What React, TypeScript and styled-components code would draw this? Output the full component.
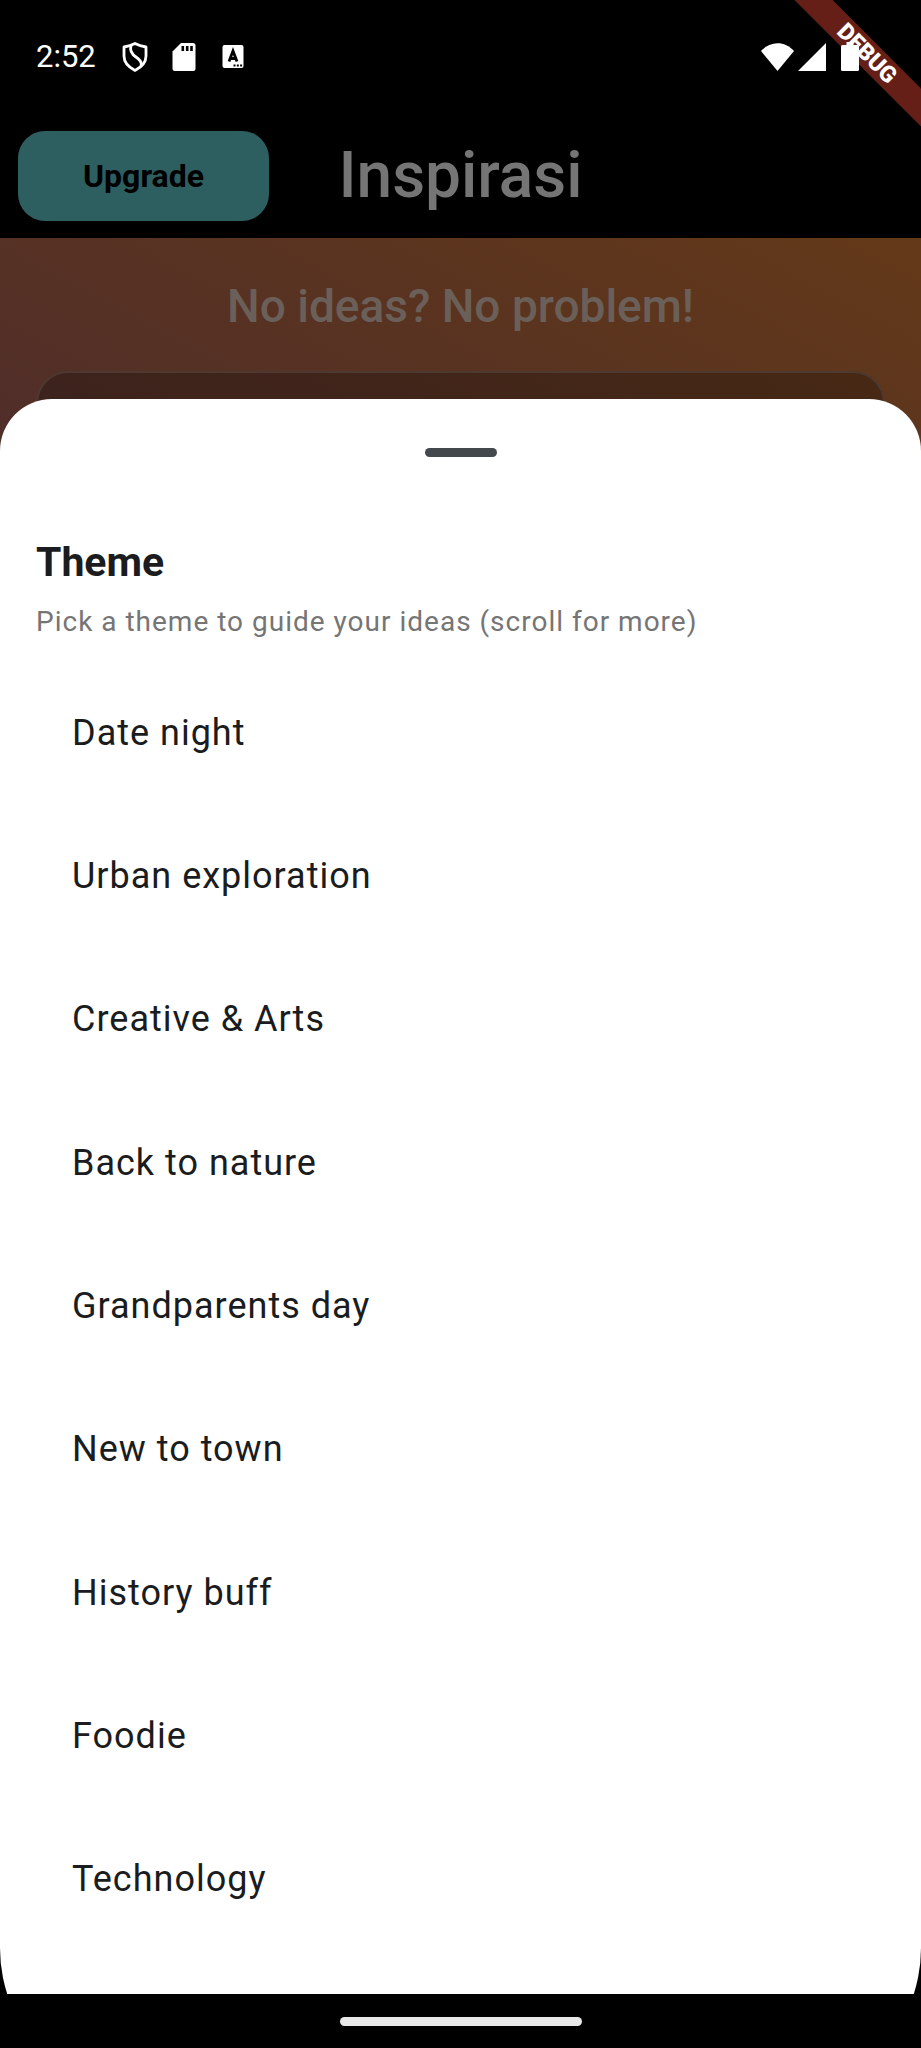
import React from "react";
import styled, { createGlobalStyle } from "styled-components";

const GlobalStyle = createGlobalStyle`
  *, *::before, *::after { box-sizing: border-box; }
  body { margin: 0; background: #000; font-family: Roboto, "Liberation Sans", sans-serif; }
  button { font: inherit; border: 0; cursor: pointer; }
  h1, h2, p, ul { margin: 0; padding: 0; }
`;

const Screen = styled.div`
  position: relative;
  display: flex;
  flex-direction: column;
  min-height: 100vh;
  background: #000;
`;

const StatusBar = styled.header`
  display: flex;
  align-items: center;
  justify-content: space-between;
  height: 113px;
  padding: 0 62px 0 36px;
`;

const StatusGroup = styled.div<{ $gap: number }>`
  position: relative;
  z-index: 2;
  display: flex;
  align-items: center;
  gap: ${(p) => p.$gap}px;
  color: #fff;
`;

const Clock = styled.time`
  margin-right: 4px;
  font-size: 31px;
  line-height: 40px;
`;

const DebugCorner = styled.div`
  position: absolute;
  top: 0;
  right: 0;
  z-index: 1;
  width: 160px;
  height: 160px;
  overflow: hidden;
  pointer-events: none;
`;

const DebugRibbon = styled.div`
  position: absolute;
  top: 40px;
  right: -46px;
  width: 200px;
  background: #651f17;
  color: #fff;
  font-size: 23px;
  font-weight: 900;
  line-height: 27px;
  text-align: center;
  transform: rotate(45deg);
`;

const AppBar = styled.div`
  display: grid;
  grid-template-columns: 1fr auto 1fr;
  align-items: center;
  height: 125px;
  padding: 0 18px;
`;

const UpgradeButton = styled.button`
  justify-self: start;
  width: 251px;
  height: 90px;
  border-radius: 27px;
  background: #2e5f60;
  color: #000;
  font-size: 32px;
  font-weight: 700;
`;

const AppTitle = styled.h1`
  color: #757575;
  font-size: 64px;
  font-weight: 500;
  line-height: 76px;
`;

const Hero = styled.section`
  padding: 41px 36px 0;
  background: linear-gradient(208deg, #633918 0%, #4f2d2a 100%);
`;

const HeroTitle = styled.h2`
  color: #6b6059;
  font-size: 46px;
  font-weight: 500;
  line-height: 54px;
  text-align: center;
`;

const IdeaCard = styled.div`
  height: 100px;
  margin-top: 38px;
  border: 2px solid #4d3930;
  border-bottom: 0;
  border-radius: 32px 32px 0 0;
  background: rgba(0, 0, 0, 0.25);
`;

const SheetViewport = styled.div`
  position: relative;
  display: flex;
  flex: 1;
  margin-top: -72px;
  overflow: hidden;
`;

const Sheet = styled.main`
  display: flex;
  flex: 1;
  flex-direction: column;
  margin-bottom: -104px;
  padding: 49px 36px 147px;
  border-radius: 52px 52px 150px 150px;
  background: #fff;
  color: #1a1c20;
`;

const DragHandle = styled.div`
  align-self: center;
  width: 72px;
  height: 9px;
  border-radius: 5px;
  background: #43484c;
`;

const SheetTitle = styled.h2`
  margin-top: 81px;
  font-size: 41px;
  font-weight: 700;
  line-height: 48px;
`;

const SheetHint = styled.p`
  margin-top: 16px;
  color: #757575;
  font-size: 28px;
  letter-spacing: 1px;
  line-height: 40px;
`;

const ThemeList = styled.ul`
  display: flex;
  flex: 1;
  flex-direction: column;
  margin-top: 19px;
  list-style: none;
`;

const ThemeItem = styled.li`
  display: flex;
  flex: 1;
  min-height: 72px;
`;

const ThemeButton = styled.button`
  flex: 1;
  padding: 0 36px;
  background: none;
  color: inherit;
  font-size: 36px;
  letter-spacing: 1px;
  line-height: 44px;
  text-align: left;
`;

const NavBar = styled.footer`
  display: flex;
  align-items: center;
  justify-content: center;
  height: 54px;
`;

const NavPill = styled.div`
  width: 242px;
  height: 9px;
  border-radius: 5px;
  background: #e8e8e8;
`;

const BatterySlot = styled.span`
  display: flex;
  margin-left: 11px;
`;

const themes = [
  "Date night",
  "Urban exploration",
  "Creative & Arts",
  "Back to nature",
  "Grandparents day",
  "New to town",
  "History buff",
  "Foodie",
  "Technology",
];

const ShieldIcon = () => (
  <svg width="28" height="30" viewBox="-1 0 28 30" fill="none" stroke="#fff" strokeWidth="2.8" strokeLinejoin="round">
    <path d="M13 1.500C9.500 3.300 6 4.300 2 5V14c0 6.600 4.800 11.300 11 14.400C19.200 25.300 24 20.600 24 14V5C20 4.300 16.500 3.300 13 1.500z" />
    <path d="M9 3.500C7.500 9 9.500 12 14 15c4.500 3 6.300 5.500 5 9" />
  </svg>
);

const SdCardIcon = () => (
  <svg width="28" height="28" viewBox="-2.5 0 28 28">
    <path fill="#fff" d="M8.500 0H20.500A2.500 2.500 0 0 1 23 2.500V25.500A2.500 2.500 0 0 1 20.500 28H2.500A2.500 2.500 0 0 1 0 25.500V8.500z" />
    <path fill="#000" d="M9 3h2.600v5H9zM13.400 3H16v5h-2.600zM17.700 3h2.600v5h-2.600z" />
  </svg>
);

const KeyboardIcon = () => (
  <svg width="28" height="23" viewBox="-3.5 0 28 23">
    <rect width="21" height="23" rx="2" fill="#fff" />
    <path d="M6.500 16.500 10.500 6 14.500 16.500M8 13.500h5" fill="none" stroke="#000" strokeWidth="2.800" />
    <path fill="#000" d="M11 19.500h2v2h-2zM14.300 19.500h2v2h-2zM17.600 19.500h2v2h-2z" />
  </svg>
);

const WifiIcon = () => (
  <svg width="33" height="28" viewBox="0 0 33 28">
    <path fill="#fff" d="M16.500 28 0 8C9-2.500 24-2.500 33 8z" />
  </svg>
);

const SignalIcon = () => (
  <svg width="28" height="28" viewBox="0 0 28 28">
    <path fill="#fff" d="M28 0v28H0z" />
  </svg>
);

const BatteryIcon = () => (
  <svg width="18" height="29" viewBox="0 0 18 29">
    <path fill="#fff" d="M5.500 0h7v3h4A1.500 1.500 0 0 1 18 4.500v23A1.500 1.500 0 0 1 16.500 29h-15A1.500 1.500 0 0 1 0 27.500v-23A1.500 1.500 0 0 1 1.500 3h4z" />
  </svg>
);

export default function App() {
  return (
    <Screen>
      <GlobalStyle />
      <StatusBar>
        <StatusGroup $gap={21}>
          <Clock>2:52</Clock>
          <ShieldIcon />
          <SdCardIcon />
          <KeyboardIcon />
        </StatusGroup>
        <StatusGroup $gap={4}>
          <WifiIcon />
          <SignalIcon />
          <BatterySlot>
            <BatteryIcon />
          </BatterySlot>
        </StatusGroup>
      </StatusBar>
      <DebugCorner>
        <DebugRibbon>DEBUG</DebugRibbon>
      </DebugCorner>
      <AppBar>
        <UpgradeButton type="button">Upgrade</UpgradeButton>
        <AppTitle>Inspirasi</AppTitle>
      </AppBar>
      <Hero>
        <HeroTitle>No ideas? No problem!</HeroTitle>
        <IdeaCard />
      </Hero>
      <SheetViewport>
        <Sheet>
          <DragHandle />
          <SheetTitle>Theme</SheetTitle>
          <SheetHint>Pick a theme to guide your ideas (scroll for more)</SheetHint>
          <ThemeList>
            {themes.map((theme) => (
              <ThemeItem key={theme}>
                <ThemeButton type="button">{theme}</ThemeButton>
              </ThemeItem>
            ))}
          </ThemeList>
        </Sheet>
      </SheetViewport>
      <NavBar>
        <NavPill />
      </NavBar>
    </Screen>
  );
}
